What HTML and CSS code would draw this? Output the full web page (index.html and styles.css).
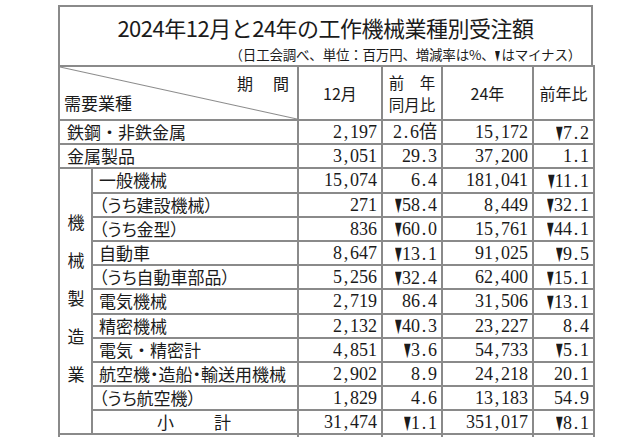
FILE: index.html
```html
<!DOCTYPE html>
<html lang="ja">
<head>
<meta charset="utf-8">
<title>2024年12月と24年の工作機械業種別受注額</title>
<link rel="stylesheet" href="styles.css">
</head>
<body>
<div class="sheet">
  <div class="caption">
    <h1 class="title">2024年12月と24年の工作機械業種別受注額</h1>
    <p class="note">（日工会調べ、単位：百万円、増減率は%、<span class="neg">▼</span>はマイナス）</p>
  </div>
  <table class="grid">
    <colgroup>
      <col class="c-group"><col class="c-label"><col class="c-month"><col class="c-mrate"><col class="c-year"><col class="c-yrate">
    </colgroup>
    <thead>
      <tr class="head">
        <th colspan="2" class="corner"><div class="corner-in"><span class="period">期　間</span><span class="industry">需要業種</span></div></th>
        <th>12月</th>
        <th class="stack"><span>前　年</span><span>同月比</span></th>
        <th>24年</th>
        <th>前年比</th>
      </tr>
    </thead>
    <tbody>
      <tr><td colspan="2" class="label main">鉄鋼・非鉄金属</td><td class="num">2<span class="sep">,</span>197</td><td class="num">2<span class="sep">.</span>6倍</td><td class="num">15<span class="sep">,</span>172</td><td class="num"><span class="neg">▼</span>7<span class="sep">.</span>2</td></tr>
      <tr><td colspan="2" class="label main">金属製品</td><td class="num">3<span class="sep">,</span>051</td><td class="num">29<span class="sep">.</span>3</td><td class="num">37<span class="sep">,</span>200</td><td class="num">1<span class="sep">.</span>1</td></tr>
      <tr><td rowspan="11" class="group"><span class="vert">機械製造業</span></td><td class="label">一般機械</td><td class="num">15<span class="sep">,</span>074</td><td class="num">6<span class="sep">.</span>4</td><td class="num">181<span class="sep">,</span>041</td><td class="num"><span class="neg">▼</span>11<span class="sep">.</span>1</td></tr>
      <tr><td class="label tight">（うち建設機械）</td><td class="num">271</td><td class="num"><span class="neg">▼</span>58<span class="sep">.</span>4</td><td class="num">8<span class="sep">,</span>449</td><td class="num"><span class="neg">▼</span>32<span class="sep">.</span>1</td></tr>
      <tr><td class="label tight">（うち金型）</td><td class="num">836</td><td class="num"><span class="neg">▼</span>60<span class="sep">.</span>0</td><td class="num">15<span class="sep">,</span>761</td><td class="num"><span class="neg">▼</span>44<span class="sep">.</span>1</td></tr>
      <tr><td class="label">自動車</td><td class="num">8<span class="sep">,</span>647</td><td class="num"><span class="neg">▼</span>13<span class="sep">.</span>1</td><td class="num">91<span class="sep">,</span>025</td><td class="num"><span class="neg">▼</span>9<span class="sep">.</span>5</td></tr>
      <tr><td class="label tight">（うち自動車部品）</td><td class="num">5<span class="sep">,</span>256</td><td class="num"><span class="neg">▼</span>32<span class="sep">.</span>4</td><td class="num">62<span class="sep">,</span>400</td><td class="num"><span class="neg">▼</span>15<span class="sep">.</span>1</td></tr>
      <tr><td class="label">電気機械</td><td class="num">2<span class="sep">,</span>719</td><td class="num">86<span class="sep">.</span>4</td><td class="num">31<span class="sep">,</span>506</td><td class="num"><span class="neg">▼</span>13<span class="sep">.</span>1</td></tr>
      <tr><td class="label">精密機械</td><td class="num">2<span class="sep">,</span>132</td><td class="num"><span class="neg">▼</span>40<span class="sep">.</span>3</td><td class="num">23<span class="sep">,</span>227</td><td class="num">8<span class="sep">.</span>4</td></tr>
      <tr><td class="label">電気・精密計</td><td class="num">4<span class="sep">,</span>851</td><td class="num"><span class="neg">▼</span>3<span class="sep">.</span>6</td><td class="num">54<span class="sep">,</span>733</td><td class="num"><span class="neg">▼</span>5<span class="sep">.</span>1</td></tr>
      <tr><td class="label tight">航空機・造船・輸送用機械</td><td class="num">2<span class="sep">,</span>902</td><td class="num">8<span class="sep">.</span>9</td><td class="num">24<span class="sep">,</span>218</td><td class="num">20<span class="sep">.</span>1</td></tr>
      <tr><td class="label tight">（うち航空機）</td><td class="num">1<span class="sep">,</span>829</td><td class="num">4<span class="sep">.</span>6</td><td class="num">13<span class="sep">,</span>183</td><td class="num">54<span class="sep">.</span>9</td></tr>
      <tr><td class="label sub">小　　計</td><td class="num">31<span class="sep">,</span>474</td><td class="num"><span class="neg">▼</span>1<span class="sep">.</span>1</td><td class="num">351<span class="sep">,</span>017</td><td class="num"><span class="neg">▼</span>8<span class="sep">.</span>1</td></tr>
      <tr class="tail"><td colspan="2" class="label main"></td><td class="num"></td><td class="num"></td><td class="num"></td><td class="num"></td></tr>
    </tbody>
  </table>
</div>
</body>
</html>
```

FILE: styles.css
```css
html, body {
  margin: 0;
  padding: 0;
  background: #ffffff;
  overflow: hidden;
}

body {
  font-family: "Noto Sans CJK JP", "Noto Sans", sans-serif;
  color: #1b1b1b;
}

.sheet {
  width: 535px;
  margin: 5px 0 0 58px;
}

.caption {
  height: 58px;
  border: 2px solid #8a8a8a;
  border-bottom: none;
  display: flex;
  flex-direction: column;
}

.title {
  margin: 0;
  padding-top: 7px;
  font-size: 22px;
  font-weight: 400;
  line-height: 26px;
  letter-spacing: -0.5px;
  text-align: center;
}

.note {
  margin: 5px 0 0;
  padding-right: 10px;
  font-size: 13.5px;
  line-height: 16px;
  text-align: right;
  letter-spacing: -0.2px;
}

.note .neg {
  width: 5px;
  font-size: 14px;
  margin: 0 1px;
}

.grid {
  width: 535px;
  border-collapse: collapse;
  table-layout: fixed;
}

.c-group { width: 33px; }
.c-label { width: 206px; }
.c-month { width: 84px; }
.c-mrate { width: 60px; }
.c-year { width: 91px; }
.c-yrate { width: 61px; }

.grid th,
.grid td {
  border: 2px solid #8a8a8a;
  padding: 0;
  vertical-align: middle;
}

.grid .head {
  height: 52px;
}

.grid th {
  font-size: 16px;
  font-weight: 400;
  line-height: 20px;
  text-align: center;
}

.grid .stack {
  font-size: 15.5px;
  line-height: 22px;
}

.grid .corner {
  background: linear-gradient(to top right, transparent calc(50% - 1px), #8a8a8a 50%, transparent calc(50% + 1px));
}

.corner-in {
  height: 52px;
  box-sizing: border-box;
  padding: 6px 8px 7px 4px;
  display: flex;
  flex-direction: column;
  justify-content: space-between;
}

.period {
  align-self: flex-end;
  letter-spacing: 2px;
  margin-right: -2px;
}

.industry {
  align-self: flex-start;
  font-size: 17px;
}

.stack span {
  display: block;
}

.grid tbody tr {
  height: 24.2px;
}

.grid .label {
  font-size: 17px;
  line-height: 20px;
  padding-left: 6px;
  white-space: nowrap;
}

.grid .label.main {
  padding-left: 7px;
}

.grid .label.tight {
  font-feature-settings: "palt";
}

.grid .label.sub {
  padding-left: 0;
  text-align: center;
  letter-spacing: 2px;
}

.grid .group {
  text-align: center;
}

.vert {
  display: inline-block;
  writing-mode: vertical-rl;
  text-orientation: upright;
  font-size: 17px;
  line-height: 20px;
  letter-spacing: 21px;
  padding-top: 21px;
}

.grid .num {
  font-family: "Liberation Serif", "Noto Sans CJK JP", serif;
  font-size: 18px;
  line-height: 20px;
  text-align: right;
  padding-right: 4px;
  white-space: nowrap;
}

.sep {
  display: inline-block;
  width: 8px;
  text-align: center;
}

.neg {
  display: inline-block;
  width: 7px;
  font-family: "DejaVu Sans", sans-serif;
  font-size: 19px;
  line-height: 20px;
  transform: scaleX(0.45);
  transform-origin: left center;
}

.grid .tail {
  height: 24px;
}
```
